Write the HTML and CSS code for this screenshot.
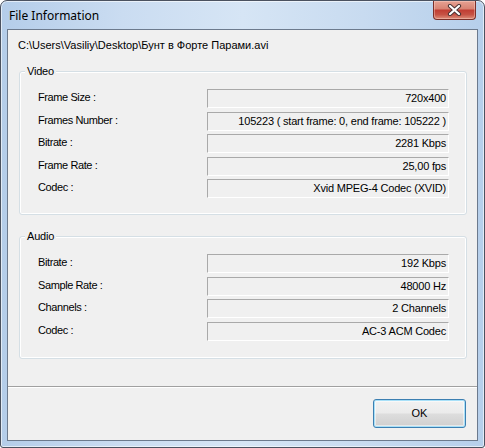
FILE: index.html
```html
<!DOCTYPE html>
<html>
<head>
<meta charset="utf-8">
<title>File Information</title>
<link rel="stylesheet" href="styles.css">
</head>
<body>
<div class="window">
  <div class="titlebar">
    <span class="title">File Information</span>
    <button class="close" aria-label="Close">
      <svg width="15" height="12" viewBox="0 0 15 12">
        <path d="M3 2 L12 10 M12 2 L3 10" stroke="#4a3434" stroke-width="4.2" stroke-linecap="round"/>
        <path d="M3 2 L12 10 M12 2 L3 10" stroke="#ffffff" stroke-width="2.2" stroke-linecap="round"/>
      </svg>
    </button>
  </div>
  <div class="client">
    <div class="path">C:\Users\Vasiliy\Desktop\Бунт в Форте Парами.avi</div>

    <fieldset class="group video">
      <legend>Video</legend>
      <div class="rows">
        <span class="label">Frame Size :</span><span class="value">720x400</span>
        <span class="label">Frames Number :</span><span class="value">105223 ( start frame: 0, end frame: 105222 )</span>
        <span class="label">Bitrate :</span><span class="value">2281 Kbps</span>
        <span class="label">Frame Rate :</span><span class="value">25,00 fps</span>
        <span class="label">Codec :</span><span class="value">Xvid MPEG-4 Codec (XVID)</span>
      </div>
    </fieldset>

    <fieldset class="group audio">
      <legend>Audio</legend>
      <div class="rows">
        <span class="label">Bitrate :</span><span class="value">192 Kbps</span>
        <span class="label">Sample Rate :</span><span class="value">48000 Hz</span>
        <span class="label">Channels :</span><span class="value">2 Channels</span>
        <span class="label">Codec :</span><span class="value">AC-3 ACM Codec</span>
      </div>
    </fieldset>

    <div class="separator"></div>
    <div class="buttons">
      <button class="ok">OK</button>
    </div>
  </div>
</div>
</body>
</html>
```

FILE: styles.css
```css
* { box-sizing: border-box; }

html, body {
  margin: 0;
  padding: 0;
  background: #ffffff;
}

body {
  font-family: "Liberation Sans", Arial, sans-serif;
  font-size: 11px;
  color: #000;
}

.window {
  width: 485px;
  height: 448px;
  border: 1px solid #4b5260;
  border-radius: 7px 7px 3px 3px;
  background: linear-gradient(to right, #b4cde9 0%, #cadcf1 25%, #d6e5f5 50%, #c8dbf0 75%, #b6cfeb 100%);
  box-shadow: inset 0 0 0 1px rgba(255,255,255,0.6);
  padding: 0 6px 6px 6px;
  display: flex;
  flex-direction: column;
}

.titlebar {
  height: 28px;
  display: flex;
  align-items: flex-start;
}

.title {
  font-family: "Noto Sans", "Open Sans", sans-serif;
  font-size: 12px;
  line-height: 16px;
  margin: 7px 0 0 2px;
  color: #000;
}

.close {
  margin-left: auto;
  margin-right: 2px;
  width: 43px;
  height: 19px;
  padding: 0;
  border: 1px solid #7b2f29;
  border-top: none;
  border-radius: 0 0 4px 4px;
  background: linear-gradient(to bottom, #e6a293 0%, #d88474 42%, #c13f34 52%, #c65244 75%, #dd8e7a 100%);
  box-shadow: inset 0 0 0 1px rgba(255,220,210,0.4);
  display: flex;
  align-items: center;
  justify-content: center;
}

.client {
  flex: 1;
  background: #f0f0f0;
  border: 1px solid #6c7a8d;
  display: flex;
  flex-direction: column;
}

.path {
  line-height: 13px;
  margin: 9px 0 0 10px;
}

.group {
  margin: 13px 0 0 11px;
  width: 448px;
  padding: 11px 0 16px 0;
  border: 1px solid #d5dfe5;
  border-radius: 3px;
  box-shadow: inset 0 0 0 1px #ffffff;
  min-width: 0;
}

.group.audio {
  margin-top: 15px;
  padding-bottom: 17px;
}

.group legend {
  margin-left: 5px;
  padding: 0 2px;
  line-height: 13px;
  background: #f0f0f0;
  letter-spacing: -0.2px;
}

.rows {
  display: grid;
  grid-template-columns: 169px 242px;
  grid-auto-rows: 19px;
  row-gap: 3.5px;
  padding-left: 18px;
}

.label {
  line-height: 13px;
  padding-top: 2px;
  letter-spacing: -0.4px;
}

.value {
  border-top: 1px solid #a9a9a9;
  border-left: 1px solid #a9a9a9;
  border-bottom: 1px solid #ffffff;
  border-right: 1px solid #ffffff;
  text-align: right;
  line-height: 17px;
  padding-right: 2px;
  white-space: nowrap;
  letter-spacing: -0.2px;
}

.separator {
  margin-top: 27px;
  height: 2px;
  border-top: 1px solid #a0a0a0;
  border-bottom: 1px solid #ffffff;
}

.buttons {
  display: flex;
  justify-content: flex-end;
  padding: 11px 11px 0 0;
}

.ok {
  width: 93px;
  height: 29px;
  font-family: "Liberation Sans", Arial, sans-serif;
  font-size: 11px;
  color: #000;
  border: 1px solid #3c7fb1;
  border-radius: 3px;
  background: linear-gradient(to bottom, #f2f2f2 0%, #ebebeb 48%, #dddddd 52%, #cfcfcf 100%);
  box-shadow: inset 0 0 0 1px #a8e0f8, inset 0 0 0 2px rgba(255,255,255,0.5);
  padding: 0;
}
```
